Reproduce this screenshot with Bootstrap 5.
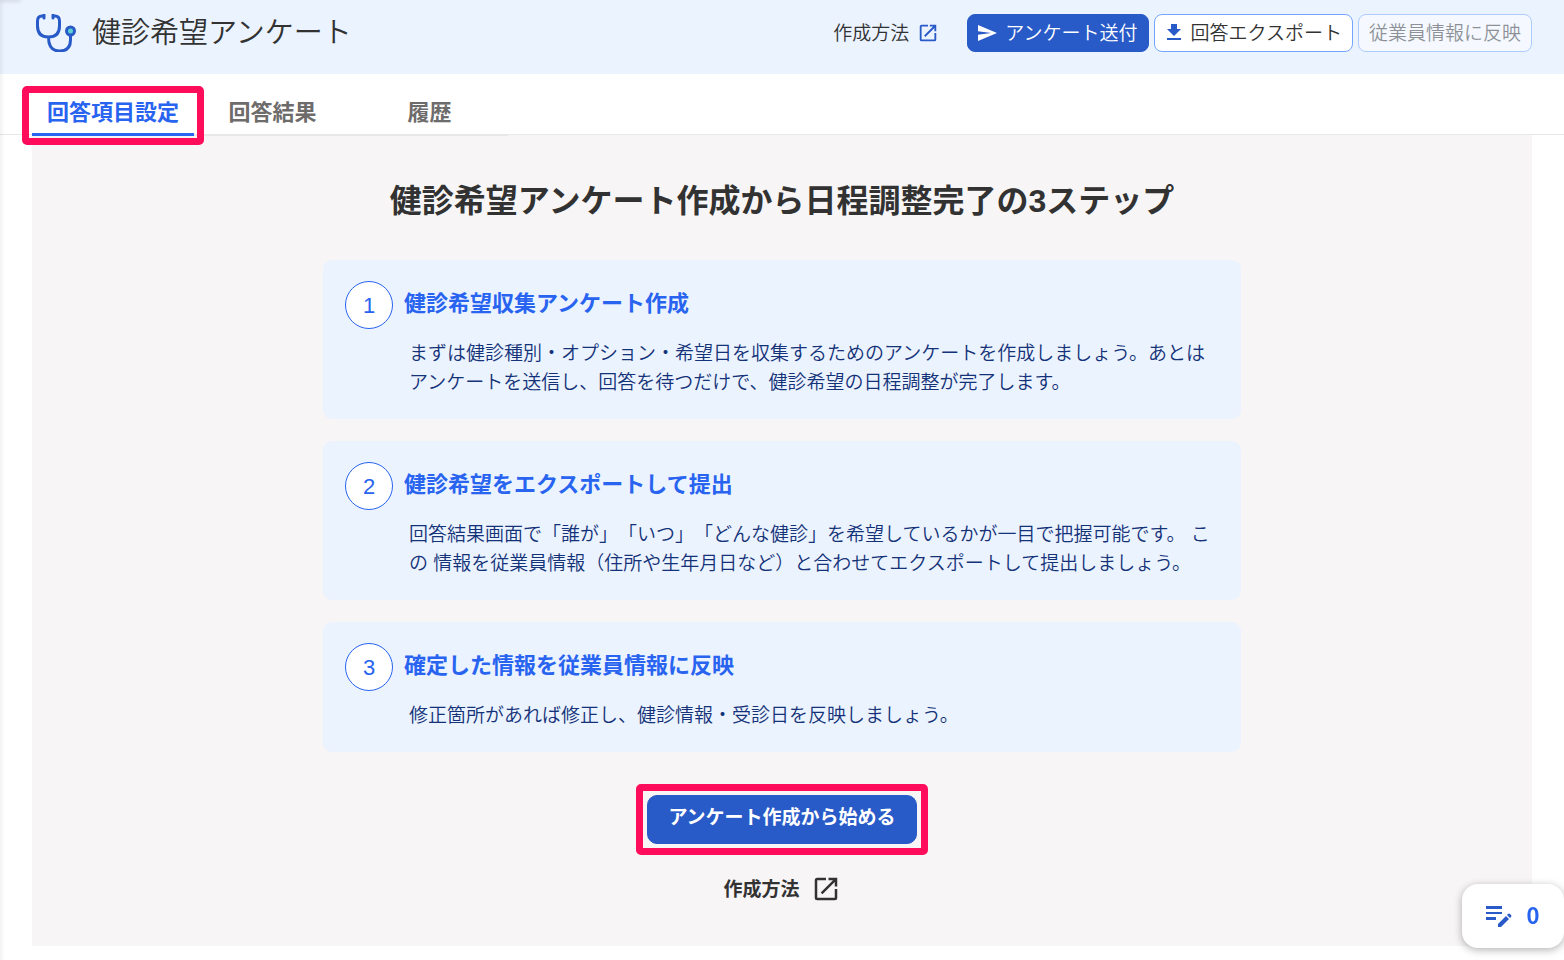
<!DOCTYPE html>
<html lang="ja">
<head>
<meta charset="utf-8">
<meta name="viewport" content="width=device-width, initial-scale=1">
<title>健診希望アンケート</title>
<link href="https://cdn.jsdelivr.net/npm/bootstrap@5.3.0/dist/css/bootstrap.min.css" rel="stylesheet">
<style>
:root{--blue:#2864f0;--deep:#285ac8;--ink:#323232;--pale:#ebf3ff;--line:#e9e7e7;--mark:#ff0d5a}
body{font-family:"Liberation Sans","Noto Sans CJK JP",sans-serif;font-size:19px;line-height:29px;color:var(--ink);min-height:100vh;text-spacing-trim:space-all;font-feature-settings:"chws" 0}
.edge-shade{left:0;top:0;bottom:0;width:5px;background:linear-gradient(90deg,rgba(0,0,0,.05),transparent);z-index:5}
.corner-shade{left:0;top:0;width:20px;height:0;box-shadow:0 0 4px 1px rgba(0,0,0,.2);z-index:5}
.top-bar{background:var(--pale);padding:14px 32px 22px}
.page-title{font-size:29px;line-height:36px;font-weight:350}
.thin{font-weight:350}
.tool-btn{font-size:19px;line-height:29px;font-weight:350;height:38px;border-radius:8px;padding:0 10px}
.tool-set{gap:5px}
.btn-main{--bs-btn-color:#fff;--bs-btn-bg:var(--deep);--bs-btn-border-color:var(--deep);--bs-btn-hover-color:#fff;--bs-btn-hover-bg:#1e46aa}
.btn-line{--bs-btn-color:var(--ink);--bs-btn-bg:#fff;--bs-btn-border-color:#73a5ff;--bs-btn-disabled-color:var(--ink);--bs-btn-disabled-bg:#fff;--bs-btn-disabled-border-color:#73a5ff;--bs-btn-disabled-opacity:.5}
.tab-bar{border-bottom:1px solid var(--line);padding:16px 32px 0}
.tab-bar .nav-link{position:relative;width:157px;height:46px;padding:0;line-height:46px;text-align:center;font-size:22px;font-weight:700;color:#6e6b6b;border:0;margin-bottom:-2px;border-bottom:2px solid var(--line)}
.tab-bar .nav-link.active{width:162px;color:var(--blue);border-bottom:3px solid var(--blue);z-index:1}
.callout{position:absolute;border:7px solid var(--mark);border-radius:5px;pointer-events:none}
.callout-tab{inset:-4px -10px -12px -10px}
.callout-start{inset:-11px}
.guide{background:#f7f5f5;margin:0 32px 14px;padding:42px 16px}
.guide h2{font-size:32px;line-height:48px;font-weight:700;margin-bottom:35px}
.steps{max-width:918px;gap:22px}
.step-box{background:var(--pale);border-radius:9px;padding:21px 22px 22px}
.step-no{width:48px;height:48px;border:1px solid var(--blue);background:#fff;color:var(--blue);font-size:22px;margin-right:11px}
.step-box h3{font-size:22px;line-height:46px;font-weight:700;color:var(--blue);margin:0}
.step-box p{color:#143278;font-weight:350;margin:10px 0 0 64px}
.start-area{margin-top:43px;gap:30px}
.start-btn{width:270px;height:49px;border-radius:10px;font-size:19px;font-weight:700;padding:0 0 2px}
.how-link{gap:11px}
.fab{position:fixed;right:0;bottom:12px;width:102px;height:64px;border-radius:16px;box-shadow:0 2px 8px rgba(0,0,0,.3);font-family:"Noto Sans CJK JP",sans-serif;font-weight:700;font-size:22px;gap:14px;padding:0 2px 4px 0}
.fab,.fab:hover{color:var(--blue)}
a{color:inherit;text-decoration:none}
</style>
</head>
<body>
<div class="edge-shade position-fixed"></div>
<div class="corner-shade position-fixed"></div>
<header class="top-bar d-flex flex-wrap align-items-center">
  <svg class="me-3" width="44" height="38" viewBox="0 0 44 38" fill="none" stroke="#285ac8" stroke-width="3" stroke-linecap="round" stroke-linejoin="round"><path d="M12 2H10Q5.500 2 5.500 7V12Q5.500 23 16.500 23Q27.500 23 27.500 12V7Q27.500 2 23 2H21M12 1V4M21 1V4M16.500 23Q16.500 37 27.500 37Q38.500 37 38.500 26V22"/><circle cx="38.500" cy="17" r="4" fill="#5fd2d2"/></svg>
  <h1 class="page-title mb-0 me-auto">健診希望アンケート</h1>
  <a class="thin d-flex align-items-center gap-2 me-4" href="#">作成方法
    <svg width="22" height="22" viewBox="0 0 24 24" fill="#285ac8"><path d="M19 19H5V5h7V3H5a2 2 0 0 0-2 2v14a2 2 0 0 0 2 2h14a2 2 0 0 0 2-2v-7h-2zM14 3v2h3.590l-9.830 9.830 1.410 1.410L19 6.410V10h2V3z"/></svg></a>
  <div class="tool-set d-flex ms-1">
  <button type="button" class="btn btn-main tool-btn d-flex align-items-center gap-2"><svg width="19" height="16" viewBox="0 0 20 18" preserveAspectRatio="none" fill="#fff"><path d="M0 0 20 9 0 18V11L14 9 0 7z"/></svg>アンケート送付</button>
  <button type="button" class="btn btn-line tool-btn d-flex align-items-center gap-2"><svg width="18" height="20" viewBox="0 0 18 20" fill="#285ac8"><path d="M6 1h6v5h4l-7 7-7-7h4zM2 15h14v2H2z"/></svg>回答エクスポート</button>
  <button type="button" class="btn btn-line tool-btn" disabled>従業員情報に反映</button>
  </div>
</header>
<nav class="tab-bar nav">
  <a class="nav-link active" href="#" aria-current="page">回答項目設定<span class="callout callout-tab"></span></a>
  <a class="nav-link" href="#">回答結果</a>
  <a class="nav-link" href="#">履歴</a>
</nav>
<main class="guide text-center">
  <h2>健診希望アンケート作成から日程調整完了の3ステップ</h2>
  <div class="steps d-flex flex-column mx-auto text-start">
    <section class="step-box">
      <div class="d-flex"><span class="step-no rounded-circle d-flex align-items-center justify-content-center">1</span><h3>健診希望収集アンケート作成</h3></div>
      <p>まずは健診種別・オプション・希望日を収集するためのアンケートを作成しましょう。あとはアンケートを送信し、回答を待つだけで、健診希望の日程調整が完了します。</p>
    </section>
    <section class="step-box">
      <div class="d-flex"><span class="step-no rounded-circle d-flex align-items-center justify-content-center">2</span><h3>健診希望をエクスポートして提出</h3></div>
      <p>回答結果画面で「誰が」「いつ」「どんな健診」を希望しているかが一目で把握可能です。 この 情報を従業員情報（住所や生年月日など）と合わせてエクスポートして提出しましょう。</p>
    </section>
    <section class="step-box">
      <div class="d-flex"><span class="step-no rounded-circle d-flex align-items-center justify-content-center">3</span><h3>確定した情報を従業員情報に反映</h3></div>
      <p>修正箇所があれば修正し、健診情報・受診日を反映しましょう。</p>
    </section>
  </div>
  <div class="start-area d-flex flex-column align-items-center">
    <div class="position-relative"><button type="button" class="btn btn-main start-btn d-block">アンケート作成から始める</button><span class="callout callout-start"></span></div>
    <a class="how-link fw-bold d-flex align-items-center" href="#">作成方法
      <svg width="30" height="30" viewBox="0 0 24 24" fill="#323232"><path d="M19 19H5V5h7V3H5a2 2 0 0 0-2 2v14a2 2 0 0 0 2 2h14a2 2 0 0 0 2-2v-7h-2zM14 3v2h3.590l-9.830 9.830 1.410 1.410L19 6.410V10h2V3z"/></svg></a>
  </div>
</main>
<button type="button" class="fab btn bg-white border-0 d-flex align-items-center justify-content-center"><svg class="mt-1" width="28" height="24" viewBox="0 0 28 24" fill="#285ac8"><path d="M1 2h16v3H1zM1 8h16v2H1zM1 13h10v3H1zM13 20l8-8 3 3-8 8h-3zM22 11l1-1q1-1 2 0l1 1q1 1 0 2l-1 1z"/></svg>0</button>
<script src="https://cdn.jsdelivr.net/npm/bootstrap@5.3.0/dist/js/bootstrap.bundle.min.js"></script>
</body>
</html>
